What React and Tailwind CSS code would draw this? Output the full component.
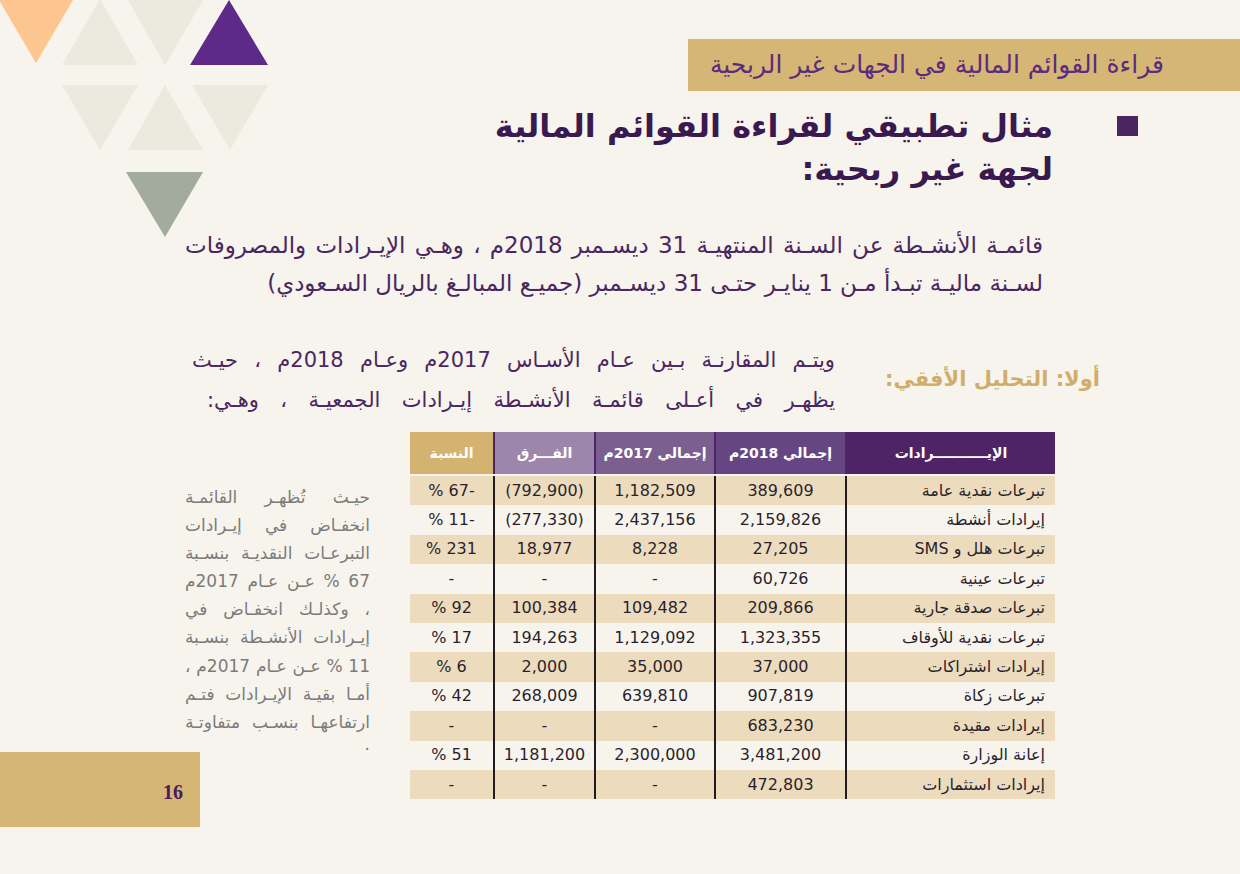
const rows = [
  ["تبرعات نقدية عامة", "389,609", "1,182,509", "(792,900)", "-67 %"],
  ["إيرادات أنشطة", "2,159,826", "2,437,156", "(277,330)", "-11 %"],
  ["تبرعات هلل و SMS", "27,205", "8,228", "18,977", "231 %"],
  ["تبرعات عينية", "60,726", "-", "-", "-"],
  ["تبرعات صدقة جارية", "209,866", "109,482", "100,384", "92 %"],
  ["تبرعات نقدية للأوقاف", "1,323,355", "1,129,092", "194,263", "17 %"],
  ["إيرادات اشتراكات", "37,000", "35,000", "2,000", "6 %"],
  ["تبرعات زكاة", "907,819", "639,810", "268,009", "42 %"],
  ["إيرادات مقيدة", "683,230", "-", "-", "-"],
  ["إعانة الوزارة", "3,481,200", "2,300,000", "1,181,200", "51 %"],
  ["إيرادات استثمارات", "472,803", "-", "-", "-"],
]

// side note, one entry per printed line
const sideLines = [
  "حيـث تُظهـر القائمـة",
  "انخفـاض في إيـرادات",
  "التبرعـات النقديـة بنسـبة",
  "67 % عـن عـام 2017م",
  "، وكذلـك انخفـاض في",
  "إيـرادات الأنشـطة بنسـبة",
  "11 % عـن عـام 2017م ،",
  "أمـا بقيـة الإيـرادات فتـم",
  "ارتفاعهـا بنسـب متفاوتـة",
]

const Triangles = () => (
  <svg className="absolute left-0 top-0" width="270" height="240" viewBox="0 0 270 240">
    <polygon points="-1,0 73,0 36,63" fill="#fdc58f" />
    <polygon points="62,65 138,65 100,-1" fill="#ece9df" />
    <polygon points="128,0 203,0 165,65" fill="#ece9df" />
    <polygon points="190,65 268,65 229,0" fill="#5e2a8a" />
    <polygon points="62,85 138,85 100,150" fill="#ece9df" />
    <polygon points="128,150 203,150 165,85" fill="#ece9df" />
    <polygon points="192,85 268,85 230,150" fill="#ece9df" />
    <polygon points="126,172 203,172 165,237" fill="#a3ab9f" />
  </svg>
)

const Table = () => {
  const head = [
    ["الإيـــــــــــرادات", "bg-[#4f2466]"],
    ["إجمالي 2018م", "bg-[#664682]"],
    ["إجمالي 2017م", "bg-[#7b5f8f]"],
    ["الفـــرق", "bg-[#9d86ab]"],
    ["النسبة", "bg-[#d4b26f]"],
  ]
  return (
    <div className="w-[645px] text-[#2b1f2d]">
      <div className="grid h-[42px] grid-cols-[210px_131px_120px_101px_83px]">
        {head.map(([t, bg], i) => (
          <div
            key={i}
            className={`flex items-center justify-center text-[14px] font-bold text-white ${bg} ${i < 4 ? "border-l-2 border-[#4f2466]" : ""}`}
          >
            {t}
          </div>
        ))}
      </div>
      <div className="mt-[2px]">
        {rows.map((r, ri) => (
          <div
            key={ri}
            className={`grid h-[29.4px] grid-cols-[210px_131px_120px_101px_83px] text-[16px] ${ri % 2 === 0 ? "bg-[#ecdcbd]" : ""}`}
          >
            {r.map((c, ci) => (
              <div
                key={ci}
                className={`flex items-center ${ci === 0 ? "justify-start pr-[10px]" : "justify-center"} ${ci < 4 ? "border-l-2 border-[#231a22]" : ""}`}
              >
                {c}
              </div>
            ))}
          </div>
        ))}
      </div>
    </div>
  )
}

export default function App() {
  return (
    <div
      className="relative h-[874px] w-[1240px] overflow-hidden bg-[#f7f4ee]"
      style={{ fontFamily: '"DejaVu Sans", "Noto Sans", sans-serif' }}
    >
      <Triangles />

      <div className="relative flex flex-col" dir="rtl">
        {/* شريط العنوان */}
        <div className="mt-[39px] flex h-[52px] w-[552px] items-center bg-[#d6b675] pr-[76px] text-[25px] text-[#5b2c7d]">
          قراءة القوائم المالية في الجهات غير الربحية
        </div>

        {/* العنوان */}
        <div className="mt-[14px] flex items-start gap-[64px] pr-[102px]">
          <div className="mt-[11px] h-[20px] w-[21px] shrink-0 bg-[#4b2462]" />
          <h1 className="text-[32px] font-bold leading-[43px] text-[#3a1850]">
            مثال تطبيقي لقراءة القوائم المالية
            <br />
            لجهة غير ربحية:
          </h1>
        </div>

        {/* الفقرة */}
        <div className="mr-[197px] mt-[35px] w-[858px] text-[23px] leading-[38px] text-[#4a2760]">
          <p className="text-justify [text-align-last:justify]">
            قائمـة الأنشـطة عن السـنة المنتهيـة 31 ديسـمبر 2018م ، وهـي الإيـرادات والمصروفات
          </p>
          <p>لسـنة ماليـة تبـدأ مـن 1 ينايـر حتـى 31 ديسـمبر (جميـع المبالـغ بالريال السـعودي)</p>
        </div>

        {/* التحليل الأفقي */}
        <div className="mt-[38px] flex items-center pr-[140px]">
          <div className="w-[265px] shrink-0 text-[21px] font-bold text-[#d0ae6a]">أولا: التحليل الأفقي:</div>
          <div className="w-[643px] text-[21px] leading-[40px] text-[#4a2760]">
            <p className="text-justify [text-align-last:justify]">
              ويتـم المقارنـة بـين عـام الأسـاس 2017م وعـام 2018م ، حيـث
            </p>
            <p className="pl-[15px] text-justify [text-align-last:justify]">
              يظهـر في أعـلى قائمـة الأنشـطة إيـرادات الجمعيـة ، وهـي:
            </p>
          </div>
        </div>

        {/* الجدول والملاحظة */}
        <div className="mt-[12px] flex items-start">
          <div className="mr-[185px]">
            <Table />
          </div>
          <div className="mr-[40px] flex w-[370px] flex-col items-end">
            <div className="mt-[51px] w-[185px] self-start text-[17px] leading-[28.1px] text-[#7b7b7b]">
              {sideLines.map((l, i) => (
                <p key={i} className="text-justify [text-align-last:justify]">
                  {l}
                </p>
              ))}
              <p className="h-[16px] leading-[16px]">.</p>
            </div>
            <div className="flex h-[75px] w-[200px] items-center justify-start bg-[#d6b674] pr-[17px] pt-[6px]">
              <span
                className="text-[20px] font-bold text-[#4a1c5e]"
                style={{ fontFamily: '"Liberation Serif", serif' }}
              >
                16
              </span>
            </div>
          </div>
        </div>
      </div>
    </div>
  )
}
